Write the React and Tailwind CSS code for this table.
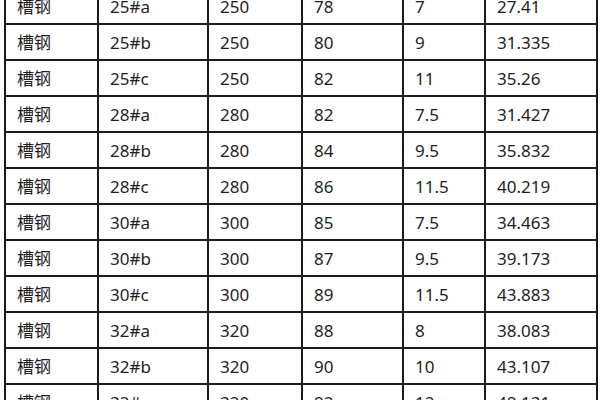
import React from "react";

const rows = [
  ["槽钢", "25#a", "250", "78", "7", "27.41"],
  ["槽钢", "25#b", "250", "80", "9", "31.335"],
  ["槽钢", "25#c", "250", "82", "11", "35.26"],
  ["槽钢", "28#a", "280", "82", "7.5", "31.427"],
  ["槽钢", "28#b", "280", "84", "9.5", "35.832"],
  ["槽钢", "28#c", "280", "86", "11.5", "40.219"],
  ["槽钢", "30#a", "300", "85", "7.5", "34.463"],
  ["槽钢", "30#b", "300", "87", "9.5", "39.173"],
  ["槽钢", "30#c", "300", "89", "11.5", "43.883"],
  ["槽钢", "32#a", "320", "88", "8", "38.083"],
  ["槽钢", "32#b", "320", "90", "10", "43.107"],
  ["槽钢", "32#c", "320", "92", "12", "48.131"],
];

export default function App() {
  return (
    <div className="w-[600px] h-[400px] overflow-hidden bg-white">
      <div
        className="ml-[4px] -mt-[11px] w-[594px] border-l-2 border-[#1c1c1c] grid grid-cols-[93px_110px_94px_101px_82px_112px] text-[17px] text-[#1e1e1e]"
        style={{ fontFamily: '"Noto Sans", "Noto Sans CJK SC", sans-serif' }}
      >
        {rows.map((r, i) =>
          r.map((c, j) => (
            <div
              key={i + "-" + j}
              className="h-[36px] border-r-2 border-b-2 border-[#1c1c1c] flex items-center pl-[11px] leading-none"
            >
              {c}
            </div>
          ))
        )}
      </div>
    </div>
  );
}
